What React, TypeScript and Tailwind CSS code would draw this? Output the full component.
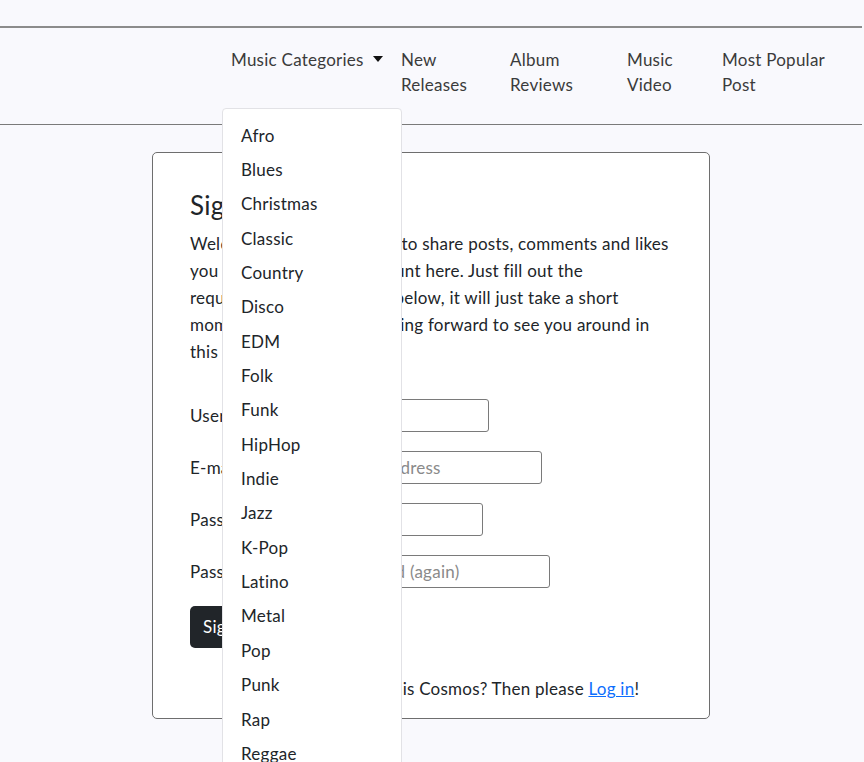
import React from "react";

const categories = [
  "Afro", "Blues", "Christmas", "Classic", "Country", "Disco", "EDM", "Folk", "Funk",
  "HipHop", "Indie", "Jazz", "K-Pop", "Latino", "Metal", "Pop", "Punk", "Rap", "Reggae", "Rock",
];

const navLinks = [
  { label: "New Releases", w: "w-[109px]", tw: "max-w-[80px]" },
  { label: "Album Reviews", w: "w-[117px]", tw: "max-w-[75px]" },
  { label: "Music Video", w: "w-[95px]", tw: "max-w-[60px]" },
  { label: "Most Popular Post", w: "w-[120px]", tw: "max-w-[112px]" },
];

const fields = [
  { label: "Username:", placeholder: "Username", type: "text", w: "w-[212px]" },
  { label: "E-mail (optional):", placeholder: "E-mail address", type: "email", w: "w-[218px]" },
  { label: "Password:", placeholder: "Password", type: "password", w: "w-[210px]" },
  { label: "Password (again):", placeholder: "Password (again)", type: "password", w: "w-[223px]" },
];

export default function App() {
  return (
    <div
      className="min-h-[762px] bg-[#f9f9fd] text-[#212529] text-[17px] tracking-[0.25px]"
      style={{ fontFamily: "Lato, 'Noto Sans', sans-serif" }}
    >
      {/* top strip */}
      <div className="h-[28px] border-b-2 border-[#8c8c8c] mr-[2px]" />

      {/* navbar */}
      <nav className="h-[97px] border-b border-[#7a7a7a] mr-[2px]">
        <ul className="flex pl-[222px] pt-[19px] leading-[25px] text-[#3b3b3b]">
          <li className="relative w-[179px]">
            <button className="flex items-center pl-[9px] text-[17px] tracking-[0.25px]">
              Music Categories
              <span className="ml-[9px] mt-[-2px] w-0 h-0 border-l-[5px] border-r-[5px] border-t-[6px] border-l-transparent border-r-transparent border-t-[#111]" />
            </button>
            <div className="absolute left-0 top-[61px] w-[180px] bg-white border border-[#e2e2e6] rounded-[4px] pt-[9px] z-10">
              {categories.map((c) => (
                <div key={c} className="h-[34.35px] flex items-center pl-[18px] text-[#212529]">
                  {c}
                </div>
              ))}
            </div>
          </li>
          {navLinks.map((l) => (
            <li key={l.label} className={l.w}>
              <span className={`block ${l.tw}`}>{l.label}</span>
            </li>
          ))}
        </ul>
      </nav>

      {/* sign up card */}
      <main className="flex justify-center pt-[27px] pb-[40px]">
        <div className="w-[558px] bg-white border border-[#6e6e6e] rounded-[5px] px-[37px] pt-[37px] pb-[17px] ml-[-2px]">
          <h3 className="text-[26px] leading-[31px] mb-[9px]">Sign up</h3>
          <p className="leading-[27px] mb-[34px]">
            Welcome! If you would like to share posts, comments and likes
            <br />
            you have to create an account here. Just fill out the
            <br />
            required fields in the form below, it will just take a short
            <br />
            moment. We are really looking forward to see you around in
            <br />
            this Cosmos!
          </p>
          <form className="flex flex-col gap-[19px]">
            {fields.map((f) => (
              <div key={f.label} className="flex items-center gap-[5px] h-[33px]">
                <label>{f.label}</label>
                <input
                  type={f.type}
                  placeholder={f.placeholder}
                  className={`${f.w} h-[33px] border border-[#7a7a7a] rounded-[3px] px-[4px] placeholder:text-[#8a8a8a] bg-white`}
                />
              </div>
            ))}
            <div className="mt-[-1px]">
              <button type="button" className="bg-[#212529] text-white rounded-[5px] h-[42px] px-[13px]">
                Sign up
              </button>
            </div>
          </form>
          <p className="text-center mt-[29px] leading-[24px]">
            Already a member of this Cosmos? Then please{" "}
            <a href="#" className="text-[#0d6efd] underline">Log in</a>!
          </p>
        </div>
      </main>
    </div>
  );
}
